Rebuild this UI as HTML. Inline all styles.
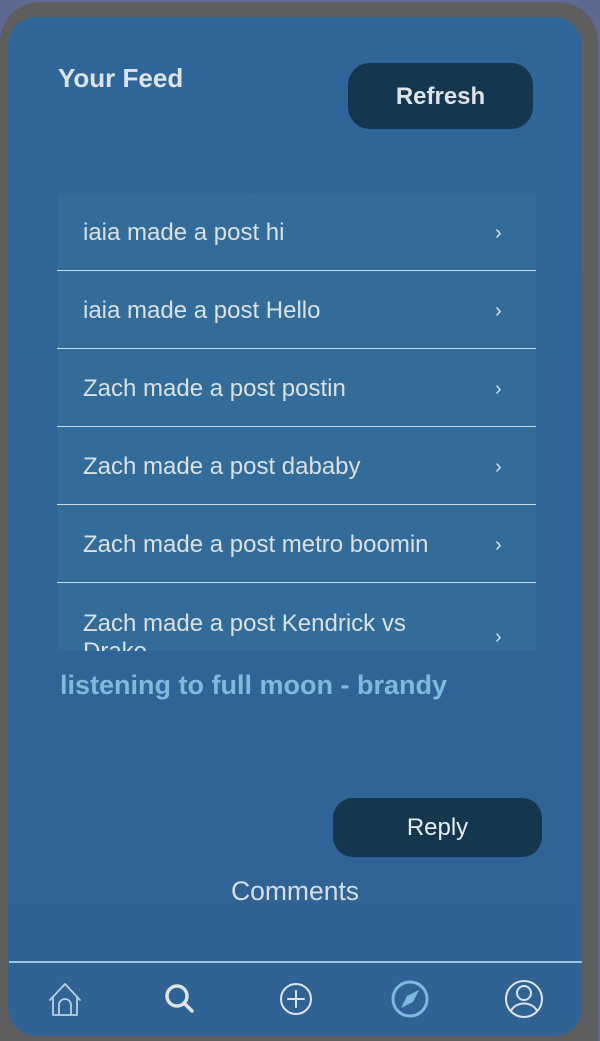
<!DOCTYPE html>
<html><head><style>
*{margin:0;padding:0;box-sizing:border-box}
body{width:600px;height:1041px;background:#5f6a93;overflow:hidden;font-family:"Liberation Sans",sans-serif}
.frame{position:absolute;left:0;top:2px;width:598px;height:1039px;background:#5e5e5e;border-radius:40px 40px 0 0}
.panel{position:absolute;left:8px;top:17px;width:574px;height:1019px;background:linear-gradient(#2f6598,#306394);border-radius:28px}
.abs{position:absolute}
.title{left:58px;top:63px;font-size:26px;font-weight:bold;color:#dde3ea}
.refresh{left:348px;top:63px;width:185px;height:66px;background:#15364f;border-radius:22px;color:#dde3ea;font-size:24px;font-weight:bold;text-align:center;line-height:68px}
.list{left:57px;top:193px;width:479px;height:458px;overflow:hidden;background:#336c99}
.row{height:78px;border-bottom:1.5px solid #c9dcea;position:relative;color:#d9e0e6;font-size:24px;padding-left:26px;line-height:80px}
.row .ch{position:absolute;left:438px;top:0;font-size:20px}
.song{left:60px;top:670px;font-size:27px;font-weight:bold;color:#7cbbdb}
.reply{left:333px;top:798px;width:209px;height:59px;background:#15364f;border-radius:20px;color:#e8ecf0;font-size:24px;text-align:center;line-height:60px}
.comments{left:0;width:590px;top:876px;text-align:center;font-size:26.5px;color:#d5dde6}
.line{left:9px;top:961px;width:573px;height:1.5px;background:#9cc6e8}
</style></head><body>
<div class="frame"></div>
<div class="panel"></div>
<div class="abs title">Your Feed</div>
<div class="abs refresh">Refresh</div>
<div class="abs list">
<div class="row">iaia made a post hi<span class="ch">›</span></div>
<div class="row">iaia made a post Hello<span class="ch">›</span></div>
<div class="row">Zach made a post postin<span class="ch">›</span></div>
<div class="row">Zach made a post dababy<span class="ch">›</span></div>
<div class="row">Zach made a post metro boomin<span class="ch">›</span></div>
<div class="row" style="line-height:28px;padding-top:27px;height:120px">Zach made a post Kendrick vs<br>Drake<span class="ch" style="top:40px">›</span></div>
</div>
<div class="abs song">listening to full moon - brandy</div>
<div class="abs reply">Reply</div>
<div class="abs comments">Comments</div>
<div class="abs line"></div>
<svg class="abs" style="left:0;top:970px" width="600" height="60" fill="none" stroke-linecap="round" stroke-linejoin="round">
<g stroke="#b9cfe2" stroke-width="1.8"><path d="M50 30 L65 14 L80 30 M53 27 V45 H77 V27 M59 45 V35 a6 6 0 0 1 12 0 V45"/></g>
<g stroke="#dde3ea" stroke-width="3.5"><circle cx="177" cy="26" r="10"/><path d="M184 33 L192 41"/></g>
<g stroke="#dde3ea" stroke-width="2"><circle cx="296" cy="29" r="15"/><path d="M296 21 V37 M288 29 H304"/></g>
<g stroke="#7cbbdb" stroke-width="3"><circle cx="410" cy="29" r="17"/></g>
<path d="M419 20 L413 32 L401 38 L407 26 Z" fill="#7cbbdb"/>
<g stroke="#dde3ea" stroke-width="2"><circle cx="524" cy="29" r="18"/><circle cx="524" cy="23" r="7"/><path d="M511 41 a14 12 0 0 1 26 0"/></g>
</svg>
</body></html>
